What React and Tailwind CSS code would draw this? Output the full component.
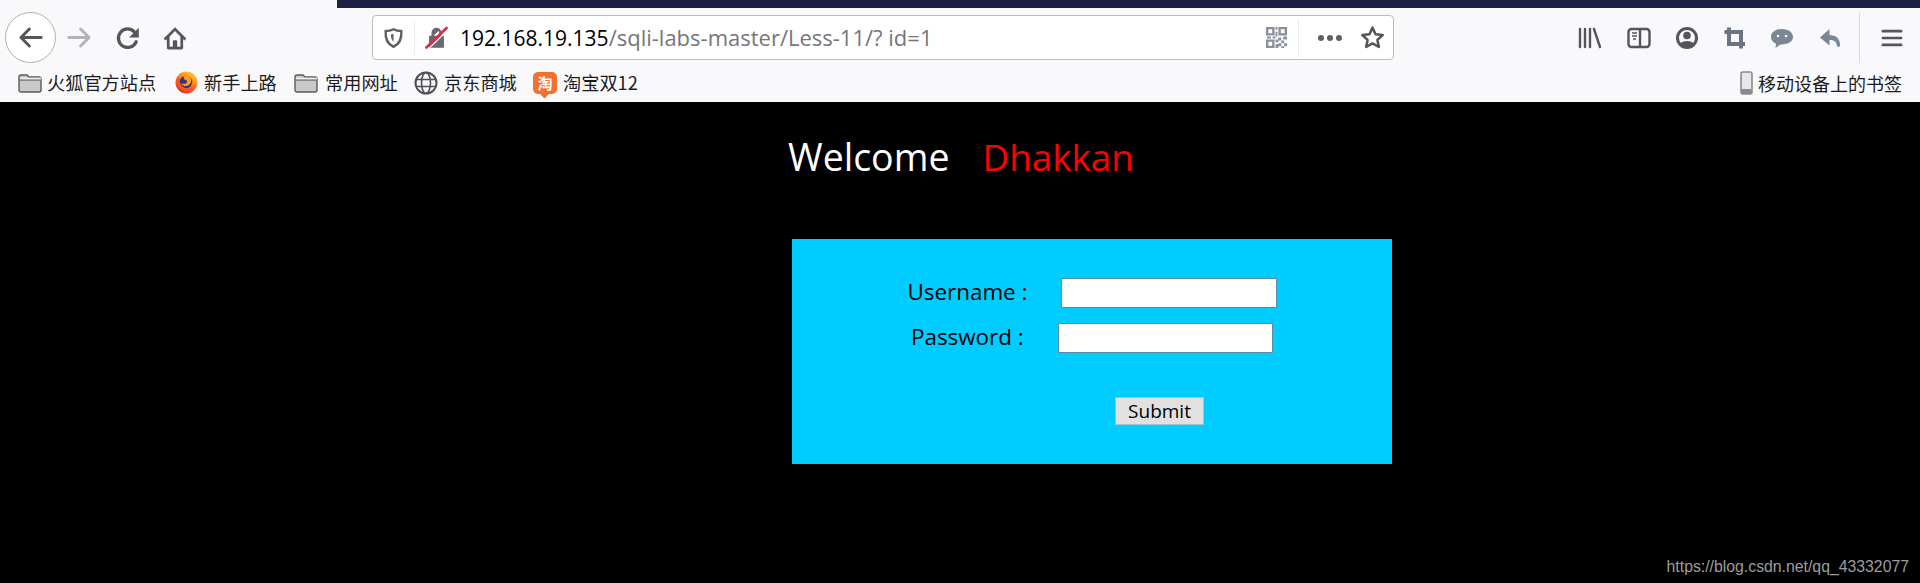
import React from 'react';

const cjk = { fontFamily: '"Noto Sans CJK SC", "Noto Sans", sans-serif' };

const Folder = () => (
  <svg width="24" height="20" viewBox="0 0 24 20" className="shrink-0">
    <path d="M1 4a2 2 0 0 1 2-2h6l2 2h10a2 2 0 0 1 2 2v11a2 2 0 0 1-2 2H3a2 2 0 0 1-2-2z" fill="#c9c9c9" stroke="#5b5b5f" strokeWidth="1.4" />
    <path d="M1.5 7h21" stroke="#5b5b5f" strokeWidth="1.2" />
    <path d="M2 5.5h21" stroke="#f2f2f2" strokeWidth="1.6" />
  </svg>
);

const FirefoxLogo = () => (
  <svg width="23" height="23" viewBox="0 0 23 23" className="shrink-0">
    <defs>
      <linearGradient id="fx" x1="0.8" y1="0" x2="0.2" y2="1">
        <stop offset="0" stopColor="#ffd43a" />
        <stop offset="0.45" stopColor="#ff7a1f" />
        <stop offset="1" stopColor="#e5213f" />
      </linearGradient>
    </defs>
    <circle cx="11.5" cy="11.5" r="11" fill="url(#fx)" />
    <circle cx="11" cy="11" r="6.2" fill="#33337f" />
    <path d="M6 4c4-2 9 0 10 4 1 3-1 6-4 7-3 .6-5-1-5.500-3 2 1.500 5 1 5.500-1 .3-2-2-2.500-3.500-3 1-1 1-2 0-2.500C7 5 6.500 4.500 6 4z" fill="#ff9a1f" />
    <path d="M2 8c-1 6 3 12 9.500 12 5 0 8.500-3 9.500-7-2 3.500-5.500 5-9 4.500C8 17 4 13 4.500 7z" fill="#f5561f" />
  </svg>
);

const Globe = () => (
  <svg width="24" height="24" viewBox="0 0 24 24" fill="none" stroke="#505055" strokeWidth="2" className="shrink-0">
    <circle cx="12" cy="12" r="10.500" />
    <ellipse cx="12" cy="12" rx="4.500" ry="10.500" strokeWidth="1.600" />
    <path d="M2 8.500h20M2 15.500h20" strokeWidth="1.600" />
  </svg>
);

const Bookmark = ({ icon, label, gap = 'gap-[5px]', width }) => (
  <div className={`flex items-center ${gap}`}>
    {icon}
    <span className="text-[18.2px] text-[#1b1b1f] whitespace-nowrap" style={{ ...cjk, width }}>
      {label}
    </span>
  </div>
);

const ToolIcon = ({ children, w = 24, h = 24, className = '' }) => (
  <svg width={w} height={h} viewBox="0 0 24 24" className={`shrink-0 ${className}`}>
    {children}
  </svg>
);

const Toolbar = () => (
  <div className="h-[59px] flex items-center">
    <div className="ml-[5px] w-[51px] h-[51px] rounded-full bg-white border border-[#b1b1b3] flex items-center justify-center shrink-0">
      <ToolIcon w={27} h={27}>
        <path d="M21.500 12H4M11 4.500 3.500 12l7.500 7.500" fill="none" stroke="#55555a" strokeWidth="2.600" strokeLinecap="round" strokeLinejoin="round" />
      </ToolIcon>
    </div>
    <ToolIcon w={27} h={27} className="ml-[10px]">
      <path d="M2.500 12H20M13 4.500l7.500 7.500-7.500 7.500" fill="none" stroke="#b4b4b7" strokeWidth="2.600" strokeLinecap="round" strokeLinejoin="round" />
    </ToolIcon>
    <ToolIcon w={26} h={26} className="ml-[22px]">
      <path d="M19.500 15.500A8.500 8.500 0 1 1 18 6.500" fill="none" stroke="#55555a" strokeWidth="3" strokeLinecap="round" />
      <path d="M22 2.500v9h-9z" fill="#55555a" />
    </ToolIcon>
    <ToolIcon w={26} h={26} className="ml-[21px]">
      <path d="M12 2 1.500 12.500l1.800 1.800L4.500 13v8a1.500 1.500 0 0 0 1.500 1.500h12a1.500 1.500 0 0 0 1.500-1.500v-8l1.200 1.300 1.800-1.800zM17 20h-3v-5a1 1 0 0 0-1-1h-2a1 1 0 0 0-1 1v5H7v-9.500l5-5 5 5z" fill="#55555a" />
    </ToolIcon>

    <div className="ml-[184px] w-[1022px] h-[45px] bg-white border border-[#bdbdc0] rounded-[4px] flex items-center shrink-0">
      <ToolIcon w={21} h={22} className="ml-[10px]">
        <path d="M12 2c3 1.500 6 2 9 2 .5 9-2 15-9 18C5 19 2.500 13 3 4c3 0 6-.5 9-2z" fill="none" stroke="#606065" strokeWidth="2.800" strokeLinejoin="round" />
        <path d="M12 7v9c-2-1-3-4-3-8z" fill="#606065" />
      </ToolIcon>
      <div className="ml-[10px] w-px h-[34px] bg-[#ececee]" />
      <ToolIcon w={23} h={23} className="ml-[10px]">
        <path d="M5 11h14v11H5zM8 11V7a4 4 0 0 1 7-2.600" fill="#6a6a6e" stroke="#6a6a6e" strokeWidth="1.500" />
        <path d="M8 11V7a4 4 0 0 1 8 0v4" fill="none" stroke="#6a6a6e" strokeWidth="2.400" />
        <path d="M1.500 22.500 22.500 2" stroke="#e22850" strokeWidth="2.800" strokeLinecap="round" />
        <path d="M4 23.500 24 4" stroke="#fff" strokeWidth="1.200" />
      </ToolIcon>
      <div className="ml-[12px] leading-none whitespace-nowrap" style={{ fontFamily: '"Open Sans", sans-serif' }}>
        <span className="text-black text-[21px]">192.168.19.135</span>
        <span className="text-[#76767a] text-[22px]">/sqli-labs-master/Less-11/? id=1</span>
      </div>
      <div className="flex-1" />
      <ToolIcon w={23} h={23}>
        <g fill="#8a9099">
          <path d="M1 1h9v9H1zm2.500 2.500v4h4v-4zM14 1h9v9h-9zm2.500 2.500v4h4v-4zM1 14h9v9H1zm2.500 2.500v4h4v-4z" fillRule="evenodd" />
          <path d="M11 1h2v3h-2zM11 6h2v5h-2zM2 11h4v2H2zM8 11h3v2H8zM14 12h3v3h-3zM19 11h4v3h-4zM11 14h3v3h-3zM17 15h3v3h-3zM14 18h3v3h-3zM20 18h3v3h-3zM11 19h3v4h-3zM17 21h3v2h-3z" />
        </g>
      </ToolIcon>
      <div className="ml-[10px] w-px h-[38px] bg-[#ececee]" />
      <div className="ml-[19px] flex gap-[3px]">
        <div className="w-[6px] h-[6px] rounded-full bg-[#5f5f64]" />
        <div className="w-[6px] h-[6px] rounded-full bg-[#5f5f64]" />
        <div className="w-[6px] h-[6px] rounded-full bg-[#5f5f64]" />
      </div>
      <ToolIcon w={25} h={25} className="ml-[18px] mr-[8px]">
        <path d="M12 2.500l2.900 6.300 6.900.8-5.100 4.700 1.400 6.800-6.100-3.400-6.100 3.400 1.400-6.800L2.200 9.600l6.900-.8z" fill="none" stroke="#55555a" strokeWidth="2.400" strokeLinejoin="round" />
      </ToolIcon>
    </div>

    <div className="flex-1" />
    <ToolIcon w={24} h={24} className="mr-[25px]">
      <path d="M2 3v18M7 3v18M12 3v18M16 3l6 18" stroke="#55555a" strokeWidth="2.400" strokeLinecap="round" fill="none" />
    </ToolIcon>
    <ToolIcon w={24} h={24} className="mr-[24px]">
      <rect x="1.500" y="3" width="21" height="18" rx="3" fill="none" stroke="#55555a" strokeWidth="2.400" />
      <path d="M13 3v18" stroke="#55555a" strokeWidth="2.400" />
      <path d="M5 7h5M5 10h5M6 13h3" stroke="#55555a" strokeWidth="1.500" />
    </ToolIcon>
    <ToolIcon w={24} h={24} className="mr-[24px]">
      <circle cx="12" cy="12" r="9.500" fill="none" stroke="#55555a" strokeWidth="3" />
      <circle cx="12" cy="9.500" r="3.800" fill="#55555a" />
      <path d="M5 18c2-4 12-4 14 0l-3 3H8z" fill="#55555a" />
    </ToolIcon>
    <ToolIcon w={24} h={24} className="mr-[23px]">
      <path d="M6 1.500V18h16M1.500 6H18v16.500" fill="none" stroke="#6b7580" strokeWidth="4" />
    </ToolIcon>
    <ToolIcon w={24} h={24} className="mr-[25px]">
      <path d="M12 3C5.500 3 1 6.500 1 11c0 3 2 5.500 5 6.800L5.500 22l5-3.600h1.500c6.500 0 11-3 11-7.400S18.500 3 12 3z" fill="#7b8794" />
      <circle cx="8" cy="10" r="1.300" fill="#f9f9fb" />
      <circle cx="16" cy="10" r="1.300" fill="#f9f9fb" />
    </ToolIcon>
    <ToolIcon w={24} h={24} className="mr-[16px]">
      <path d="M10.500 3 1 11.500l9.500 8V14c4.500 0 7 1.500 7.500 6 1 1.800 3 .8 3-1 0-6.500-4-10-10.500-10z" fill="#7b8794" />
    </ToolIcon>
    <div className="w-px h-[50px] bg-[#dcdcde]" />
    <ToolIcon w={22} h={22} className="ml-[21px] mr-[17px]">
      <path d="M2 4.500h20M2 12h20M2 19.500h20" stroke="#55555a" strokeWidth="2.800" strokeLinecap="round" />
    </ToolIcon>
  </div>
);

const Bookmarks = () => (
  <div className="h-[35px] pb-[3px] flex items-center pl-[18px]">
    <Bookmark icon={<Folder />} label="火狐官方站点" width="109px" />
    <div className="w-[19px]" />
    <Bookmark icon={<FirefoxLogo />} label="新手上路" gap="gap-[6px]" width="73px" />
    <div className="w-[17px]" />
    <Bookmark icon={<Folder />} label="常用网址" gap="gap-[7px]" width="73px" />
    <div className="w-[16px]" />
    <Bookmark icon={<Globe />} label="京东商城" gap="gap-[6px]" width="73px" />
    <div className="w-[16px]" />
    <Bookmark
      icon={
        <div className="relative w-[24px] h-[22px] rounded-[5px] bg-[#f4702f] text-white text-[15px] leading-[22px] text-center font-bold" style={cjk}>
          淘
          <div className="absolute left-[8px] bottom-[-3px] w-[7px] h-[7px] rotate-45 bg-[#f4702f] -z-0" />
        </div>
      }
      label="淘宝双12"
      gap="gap-[6px]"
      width="75px"
    />
    <div className="flex-1" />
    <div className="flex items-center gap-[5px] pr-[18px]">
      <svg width="13" height="24" viewBox="0 0 13 24" className="shrink-0">
        <rect x="1" y="1" width="11" height="22" rx="2" fill="#e8e8ea" stroke="#8a8a8f" strokeWidth="1.600" />
        <rect x="1" y="18" width="11" height="5" rx="1.500" fill="#8a8a8f" />
      </svg>
      <span className="text-[18px] text-[#1b1b1f] whitespace-nowrap" style={cjk}>移动设备上的书签</span>
    </div>
  </div>
);

export default function App() {
  return (
    <div className="w-[1920px] h-[583px] overflow-hidden bg-black flex flex-col" style={{ fontFamily: '"Open Sans", sans-serif' }}>
      <div className="bg-[#f9f9fb]">
        <div className="h-[8px] flex">
          <div className="w-[337px]" />
          <div className="flex-1 bg-[#1f2044]" />
        </div>
        <Toolbar />
        <Bookmarks />
      </div>

      <div className="flex-1 relative">
        <div className="pl-[788px] pt-[32px] h-[137px] leading-[46px] whitespace-nowrap">
          <span className="text-white text-[37.5px]">Welcome</span>
          <span className="text-[#ff0000] text-[36.800px] ml-[33px]">Dhakkan</span>
        </div>

        <div className="ml-[792px] w-[600px] h-[225px] bg-[#00ccff] flex flex-col text-black">
          <div className="mt-[39px] h-[30px] flex items-center justify-center gap-[33px]">
            <span className="w-[120px] text-[22.400px] leading-[28px] pb-[2px] whitespace-nowrap">Username :</span>
            <input className="w-[216px] h-[30px] bg-white border border-[#5a8ea0]" />
          </div>
          <div className="mt-[15px] h-[30px] flex items-center justify-center gap-[33px]">
            <span className="w-[114px] text-[22.400px] leading-[28px] pb-[2px] whitespace-nowrap">Password :</span>
            <input className="w-[215px] h-[30px] bg-white border border-[#5a8ea0]" />
          </div>
          <div className="mt-[44px] pl-[323px]">
            <button className="w-[89px] h-[28px] bg-[#e1e1e1] border border-[#9fc4d0] text-[19px] leading-none text-black">
              Submit
            </button>
          </div>
        </div>

        <span className="absolute right-[11px] bottom-[8px] text-[15.800px] leading-none text-[#9c9c9c]" style={{ fontFamily: '"Liberation Sans", sans-serif' }}>
          https://blog.csdn.net/qq_43332077
        </span>
      </div>
    </div>
  );
}
